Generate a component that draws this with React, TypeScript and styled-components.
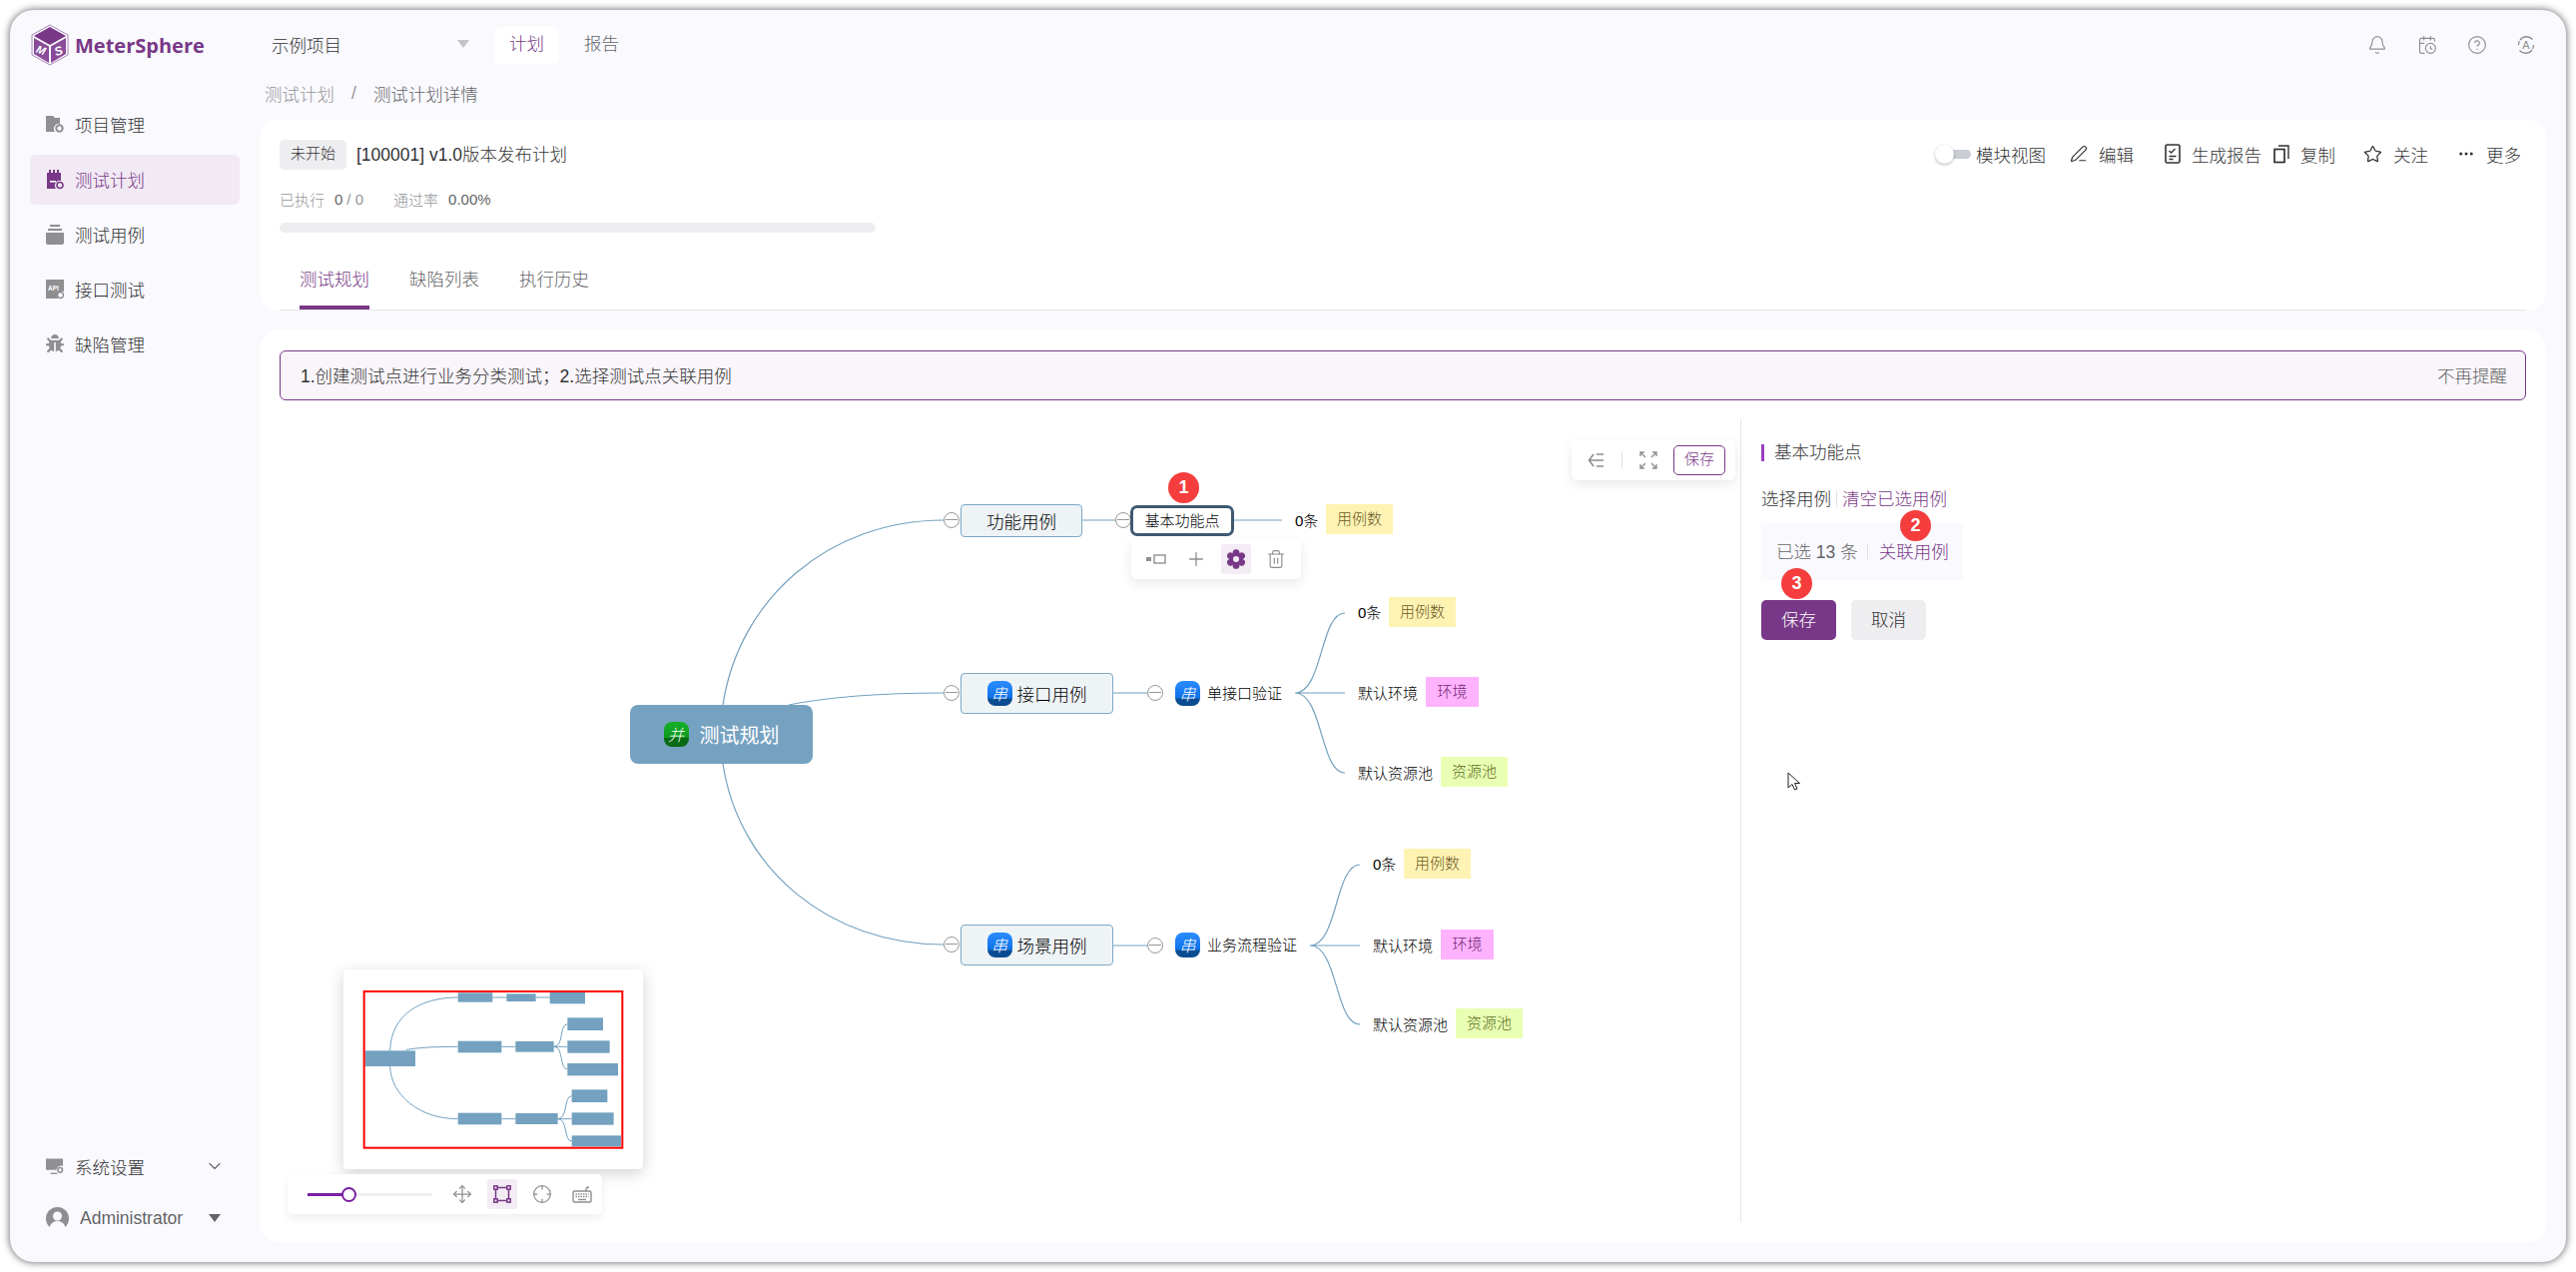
import React from 'react';
import styled, { createGlobalStyle, css } from 'styled-components';
import { Bell, CalendarClock, ChevronDown, CircleHelp, Crosshair, Ellipsis, Move, PenLine, Plus, Star, Trash2 } from 'lucide-react';
import { FaBug } from 'react-icons/fa';

const colors = {
  primary: '#783887',
  text: '#323233',
  sub: '#646466',
  muted: '#959598',
  page: '#f9f9fe',
  line: '#eeeef0',
  icon: '#8f8f92',
  edge: '#73a1bf',
};

// page coords of the mind map canvas, nodes below are given in page coords
const ORIGIN_X = 280;
const ORIGIN_Y = 419;

type Pos = { $x: number; $y: number };
const placed = css<Pos>`
  position: absolute;
  left: ${(p) => p.$x - ORIGIN_X}px;
  top: ${(p) => p.$y - ORIGIN_Y}px;
`;

const Global = createGlobalStyle`
  html, body { margin: 0; padding: 0; background: #fff; }
  body {
    font-family: "Liberation Sans", "Noto Sans CJK SC", sans-serif;
    font-size: 17.5px;
    font-weight: 300;
    color: ${colors.text};
  }
  * { box-sizing: border-box; }
`;

const Page = styled.div`
  width: 2580px;
  height: 1274px;
  padding: 10px;
  overflow: hidden;
`;

const Window = styled.div`
  height: 1254px;
  display: flex;
  background: ${colors.page};
  border-radius: 24px;
  box-shadow: 0 0 7px 1px rgba(0, 0, 0, 0.5);
  overflow: hidden;
`;

const Sidebar = styled.aside`
  width: 250px;
  flex: none;
  display: flex;
  flex-direction: column;
  padding: 14px 0 24px 20px;
`;

const Brand = styled.div`
  display: flex;
  align-items: center;
  height: 42px;
  gap: 6px;
  margin-left: 1px;
  margin-bottom: 34px;
`;

const BrandName = styled.span`
  font-family: "Open Sans", sans-serif;
  font-weight: 700;
  font-size: 20px;
  color: ${colors.primary};
`;

const Menu = styled.nav`
  display: flex;
  flex-direction: column;
  gap: 5px;
  flex: 1;
`;

const MenuItem = styled.div<{ $active?: boolean }>`
  width: 210px;
  height: 50px;
  display: flex;
  align-items: center;
  gap: 11px;
  padding: 0 0 2px 16px;
  border-radius: 6px;
  color: ${(p) => (p.$active ? colors.primary : colors.text)};
  background: ${(p) => (p.$active ? '#f1e9f4' : 'transparent')};
`;

const MenuIcon = styled.span<{ $active?: boolean }>`
  width: 18px;
  height: 18px;
  display: flex;
  color: ${(p) => (p.$active ? colors.primary : colors.icon)};
`;

const Collapse = styled(ChevronDown)`
  margin-left: auto;
  margin-right: 15px;
  color: ${colors.sub};
`;

const UserRow = styled.div`
  width: 210px;
  height: 40px;
  margin-top: 6px;
  display: flex;
  align-items: center;
  padding-left: 16px;
  gap: 11px;
  color: ${colors.sub};
`;

const Caret = styled.span`
  margin-left: auto;
  margin-right: 19px;
  width: 0;
  height: 0;
  border-left: 6px solid transparent;
  border-right: 6px solid transparent;
  border-top: 8px solid ${colors.sub};
`;

const Main = styled.main`
  flex: 1;
  min-width: 0;
  display: flex;
  flex-direction: column;
  padding: 0 20px 20px 0;
`;

const TopBar = styled.header`
  height: 70px;
  flex: none;
  display: flex;
  align-items: center;
  padding: 0 11px 0 12px;
`;

const ProjectSelect = styled.div`
  width: 211px;
  display: flex;
  align-items: center;
  justify-content: space-between;
  padding: 0 13px 2px 0;
`;

const SelectCaret = styled.span`
  width: 0;
  height: 0;
  border-left: 6px solid transparent;
  border-right: 6px solid transparent;
  border-top: 8px solid #c4c4c8;
`;

const NavPill = styled.div<{ $active?: boolean }>`
  height: 37px;
  line-height: 35px;
  padding: 0 15px;
  margin-left: ${(p) => (p.$active ? 12 : 10)}px;
  border-radius: 6px;
  background: ${(p) => (p.$active ? '#fff' : 'transparent')};
  color: ${(p) => (p.$active ? colors.primary : colors.sub)};
`;

const TopIcons = styled.div`
  margin-left: auto;
  display: flex;
  gap: 30px;
  color: ${colors.icon};
`;

const Crumbs = styled.div`
  height: 30px;
  flex: none;
  display: flex;
  align-items: center;
  padding: 0 0 4px 5px;
  margin-bottom: 10px;
  color: ${colors.muted};
`;

const CrumbSep = styled.span`
  margin: 0 17px;
`;

const CrumbNow = styled.span`
  color: ${colors.sub};
`;

const Card = styled.section`
  background: #fff;
  border-radius: 18px;
  padding: 20px 20px 0;
`;

const HeadRow = styled.div`
  height: 30px;
  display: flex;
  align-items: center;
`;

const StatusTag = styled.span`
  width: 67px;
  height: 30px;
  line-height: 28px;
  text-align: center;
  font-size: 15px;
  border-radius: 5px;
  background: ${colors.line};
  margin-right: 10px;
`;

const PlanTitle = styled.span`
  margin-bottom: 3px;
`;

const Actions = styled.div`
  margin-left: auto;
  display: flex;
  align-items: center;
  padding: 0 5px 2px 0;
`;

const Action = styled.div<{ $ml: number }>`
  display: flex;
  align-items: center;
  gap: 11px;
  margin-left: ${(p) => p.$ml}px;
`;

const Toggle = styled.span`
  display: block;
  position: relative;
  width: 36px;
  height: 9px;
  margin-right: 5px;
  border-radius: 5px;
  background: linear-gradient(90deg, #fff 40%, #c9cdd4 40%);
`;

const ToggleKnob = styled.span`
  position: absolute;
  left: 0;
  top: -5px;
  width: 19px;
  height: 19px;
  border-radius: 50%;
  background: #fff;
  box-shadow: 0 1px 3px rgba(0, 0, 0, 0.3);
`;

const Stats = styled.div`
  height: 20px;
  margin-top: 20px;
  display: flex;
  align-items: center;
  padding-bottom: 2px;
  font-size: 15px;
  color: ${colors.muted};
`;

const StatValue = styled.span`
  margin-left: 10px;
  color: ${colors.sub};
`;

const StatTotal = styled.span`
  margin-left: 4px;
  margin-right: 30px;
`;

const Progress = styled.div`
  width: 597px;
  height: 10px;
  margin-top: 13px;
  border-radius: 5px;
  background: ${colors.line};
`;

const Tabs = styled.div`
  height: 61px;
  margin-top: 17px;
  display: flex;
  gap: 40px;
  padding-left: 20px;
  border-bottom: 1px solid #e6e6ea;
`;

const Tab = styled.div<{ $active?: boolean }>`
  height: 60px;
  line-height: 52px;
  padding-top: 4px;
  border-bottom: 4px solid ${(p) => (p.$active ? colors.primary : 'transparent')};
  color: ${(p) => (p.$active ? colors.primary : colors.sub)};
`;

const PlanCard = styled(Card)`
  flex: 1;
  margin-top: 20px;
  min-height: 0;
  padding-bottom: 20px;
  display: flex;
  flex-direction: column;
`;

const Notice = styled.div`
  height: 50px;
  flex: none;
  display: flex;
  align-items: center;
  justify-content: space-between;
  padding: 0 18px 2px 20px;
  border: 1px solid ${colors.primary};
  border-radius: 6px;
  background: #f9f5fa;
`;

const NoticeClose = styled.span`
  color: ${colors.sub};
`;

const Split = styled.div`
  flex: 1;
  min-height: 0;
  margin-top: 18px;
  display: flex;
`;

const Canvas = styled.div`
  flex: 1;
  position: relative;
`;

const Edges = styled.svg`
  position: absolute;
  left: 0;
  top: 0;
`;

const MapText = styled.span<Pos>`
  ${placed}
  font-size: 15px;
  line-height: 22px;
  color: #000;
  white-space: nowrap;
`;

const Branch = styled.div<Pos & { $w: number; $h: number }>`
  ${placed}
  width: ${(p) => p.$w}px;
  height: ${(p) => p.$h}px;
  display: flex;
  align-items: center;
  justify-content: center;
  gap: 5px;
  color: #000;
  background: #eef3f6;
  border: 1.5px solid #7fa8c6;
  border-radius: 4px;
`;

const Root = styled.div<Pos>`
  ${placed}
  width: 183px;
  height: 59px;
  display: flex;
  align-items: center;
  justify-content: center;
  gap: 11px;
  font-size: 20px;
  font-weight: 400;
  color: #fff;
  background: #76a2c1;
  border-radius: 8px;
`;

const Focused = styled.div<Pos>`
  ${placed}
  width: 104px;
  height: 31px;
  line-height: 25px;
  text-align: center;
  font-size: 15px;
  color: #000;
  background: #fff;
  border: 3px solid #3e5a72;
  border-radius: 7px;
`;

const Kind = styled.span<{ $tone: 'blue' | 'green' }>`
  width: 25px;
  height: 25px;
  flex: none;
  display: flex;
  align-items: center;
  justify-content: center;
  padding-bottom: 2px;
  border-radius: 8px;
  font-size: 16px;
  font-weight: 300;
  font-style: italic;
  color: #fff;
  background: ${(p) =>
    p.$tone === 'blue'
      ? 'linear-gradient(180deg, #2a8cff 0%, #0f72e6 68%, #0a4c92 72%, #0a4c92 100%)'
      : 'linear-gradient(180deg, #16b02a 0%, #0c9a1e 62%, #086a12 66%, #086a12 100%)'};
`;

const PlacedKind = styled(Kind)<Pos>`
  ${placed}
`;

const Note = styled.span<Pos & { $w: number; $bg: string; $fg: string }>`
  ${placed}
  width: ${(p) => p.$w}px;
  height: 30px;
  line-height: 30px;
  text-align: center;
  font-size: 15px;
  background: ${(p) => p.$bg};
  color: ${(p) => p.$fg};
`;

const Fold = styled.span<Pos>`
  ${placed}
  width: 16px;
  height: 16px;
  border: 1.5px solid #979797;
  border-radius: 50%;
  background: #fff;
  &::after {
    content: '';
    position: absolute;
    left: 1px;
    right: 1px;
    top: 5.5px;
    height: 1.5px;
    background: #979797;
  }
`;

const FloatBar = styled.div<Pos & { $w: number }>`
  ${placed}
  width: ${(p) => p.$w}px;
  height: 40px;
  display: flex;
  align-items: center;
  background: #fff;
  border-radius: 5px;
  box-shadow: 0 4px 12px rgba(31, 35, 41, 0.1);
  color: ${colors.icon};
`;

const ToolSlot = styled.span<{ $on?: boolean }>`
  width: 30px;
  height: 30px;
  margin-left: 10px;
  display: flex;
  align-items: center;
  justify-content: center;
  border-radius: 3px;
  background: ${(p) => (p.$on ? '#f3ecf5' : 'transparent')};
  color: ${(p) => (p.$on ? colors.primary : colors.icon)};
`;

const ToolDivider = styled.span`
  width: 1px;
  height: 16px;
  margin: 0 1px 0 10px;
  background: #e0e0e4;
`;

const SaveSmall = styled.span`
  width: 52px;
  height: 30px;
  line-height: 26px;
  margin-left: 10px;
  text-align: center;
  font-size: 15px;
  border: 1px solid ${colors.primary};
  border-radius: 5px;
  color: ${colors.primary};
`;

const MiniMap = styled.div<Pos>`
  ${placed}
  width: 300px;
  height: 200px;
  background: #fff;
  border-radius: 4px;
  box-shadow: 0 4px 16px rgba(0, 0, 0, 0.18);
`;

const ZoomBar = styled(FloatBar)`
  padding-left: 20px;
  box-shadow: 0 4px 10px rgba(31, 35, 41, 0.07);
`;

const SliderTrack = styled.span`
  position: relative;
  width: 125px;
  height: 3px;
  margin-right: 5px;
  border-radius: 2px;
  background: ${colors.line};
`;

const SliderFill = styled.span`
  position: absolute;
  left: 0;
  top: 0;
  bottom: 0;
  width: 41px;
  background: #7b1fa2;
`;

const SliderKnob = styled.span`
  position: absolute;
  left: 34px;
  top: -6px;
  width: 15px;
  height: 15px;
  border: 2px solid #7b1fa2;
  border-radius: 50%;
  background: #fff;
`;

const Panel = styled.aside`
  width: 787px;
  flex: none;
  position: relative;
  border-left: 1px solid #e6e6ea;
  padding: 26px 0 0 20px;
`;

const PanelTitle = styled.div`
  height: 17px;
  line-height: 17px;
  padding-left: 10px;
  border-left: 3px solid #9a3fbf;
`;

const PickRow = styled.div`
  height: 20px;
  line-height: 20px;
  margin-top: 28px;
  display: flex;
  align-items: center;
`;

const PickDivider = styled.span`
  width: 1px;
  height: 16px;
  margin: 0 5px;
  background: #e0e0e4;
`;

const LinkText = styled.span`
  color: ${colors.primary};
`;

const Picked = styled.div`
  width: 202px;
  height: 57px;
  margin-top: 14px;
  display: flex;
  align-items: center;
  padding: 0 0 2px 15px;
  background: ${colors.page};
  color: ${colors.sub};
`;

const PickedDivider = styled(PickDivider)`
  margin: 0 11px 0 9px;
`;

const Buttons = styled.div`
  margin-top: 20px;
  display: flex;
  gap: 15px;
`;

const Button = styled.button<{ $primary?: boolean }>`
  width: 75px;
  height: 40px;
  padding: 0 0 3px;
  border: none;
  border-radius: 5px;
  font: inherit;
  color: ${(p) => (p.$primary ? '#fff' : colors.text)};
  background: ${(p) => (p.$primary ? colors.primary : colors.line)};
`;

const Badge = styled.span<Pos>`
  ${placed}
  width: 31px;
  height: 31px;
  line-height: 31px;
  text-align: center;
  border-radius: 50%;
  font-size: 18px;
  font-weight: 700;
  color: #fff;
  background: #f53d3d;
`;

// the panel is a separate offset parent, its left edge sits at 1743 in the page
const PanelBadge = styled(Badge)`
  left: ${(p) => p.$x - 1743}px;
`;

const Pointer = styled.svg`
  position: absolute;
  left: 46px;
  top: 354px;
`;

const Logo = () => (
  <svg width="38" height="42" viewBox="0 0 38 42">
    <path d="M19 1 37 11v20L19 41 1 31V11z" fill="none" stroke={colors.primary} strokeWidth="1" opacity=".6" />
    <path d="M19 3 35 12 19 21 3 12z" fill={colors.primary} />
    <path d="M3 14 18 22.500V39L3 30z" fill="#8a4b99" />
    <path d="M35 14 20 22.500V39L35 30z" fill="#8a4b99" />
    <text x="5" y="30" fontSize="11" fontWeight="700" fontStyle="italic" fill="#fff" fontFamily="Liberation Sans" transform="rotate(20 10 28)">M</text>
    <text x="24" y="31" fontSize="12" fontWeight="700" fontStyle="italic" fill="#fff" fontFamily="Liberation Sans" transform="rotate(-20 28 28)">S</text>
  </svg>
);

const ProjectIcon = () => (
  <svg width="18" height="18" viewBox="0 0 18 18" fill="currentColor">
    <path d="M0 1h7l2 2h5v6a5 5 0 0 0-5 8H0z" />
    <circle cx="13.500" cy="13.500" r="3.200" fill="none" stroke="currentColor" strokeWidth="2" />
  </svg>
);

const PlanIcon = () => (
  <svg width="18" height="20" viewBox="0 0 18 20" fill="currentColor">
    <path d="M1 3h2V0h2v3h2V0h2v3h2V0h2v3h2v8a5 5 0 0 0-5 8H1z" />
    <rect x="4" y="11" width="6" height="1.600" fill="#fff" />
    <circle cx="14" cy="15.500" r="3" fill="none" stroke="currentColor" strokeWidth="1.600" />
  </svg>
);

const CaseIcon = () => (
  <svg width="18" height="20" viewBox="0 0 18 20" fill="currentColor">
    <rect x="4" y="0" width="10" height="2" />
    <rect x="2" y="4" width="14" height="2" />
    <path d="M0 8h18v10a2 2 0 0 1-2 2H2a2 2 0 0 1-2-2z" />
  </svg>
);

const ApiIcon = () => (
  <svg width="18" height="20" viewBox="0 0 18 20" fill="currentColor">
    <path d="M0 0h18v12a5 5 0 0 0-6 7H0z" />
    <text x="2" y="11" fontSize="6.500" fontWeight="700" fill="#fff" fontFamily="Liberation Sans">API</text>
    <circle cx="14.500" cy="15.500" r="3" fill="none" stroke="currentColor" strokeWidth="1.400" />
  </svg>
);

const SettingsIcon = () => (
  <svg width="19" height="18" viewBox="0 0 19 18" fill="currentColor">
    <path d="M0 1h18v8a5 5 0 0 0-7 4H0z" />
    <rect x="5" y="16" width="7" height="1.400" />
    <circle cx="15" cy="13" r="2.500" fill="none" stroke="currentColor" strokeWidth="1.600" />
  </svg>
);

const AvatarIcon = () => (
  <svg width="23" height="23" viewBox="0 0 23 23">
    <circle cx="11.500" cy="11.500" r="11.500" fill={colors.icon} />
    <circle cx="11.500" cy="9" r="4.500" fill={colors.page} />
    <path d="M3.500 21c1-5 4-7 8-7s7 2 8 7a11 11 0 0 1-16 0z" fill={colors.page} />
  </svg>
);

const LangIcon = () => (
  <svg width="18" height="20" viewBox="0 0 18 20" fill="none" stroke="currentColor" strokeWidth="1.300">
    <path d="M3 5a8 8 0 0 1 12.500-.5M15 15a8 8 0 0 1-12.500.5M1.500 10a7.500 7.500 0 0 1 1-4M16.500 10a7.500 7.500 0 0 1-1 4" />
    <text x="9" y="14" textAnchor="middle" fontSize="11" stroke="none" fill="currentColor" fontFamily="Liberation Sans">A</text>
  </svg>
);

const ReportIcon = () => (
  <svg width="16" height="20" viewBox="0 0 16 20" fill="none" stroke={colors.text} strokeWidth="1.600">
    <rect x="1" y="1" width="14" height="18" rx="1.500" />
    <path d="M4.500 7l2 2 4-4M4.500 12.500h7M4.500 15.500h4" strokeWidth="1.300" />
  </svg>
);

const CopyIcon = () => (
  <svg width="16" height="20" viewBox="0 0 16 20" fill="none" stroke={colors.text} strokeWidth="1.700">
    <rect x="1" y="5.500" width="10" height="13" />
    <path d="M5 2h10v13" strokeWidth="1.400" />
  </svg>
);

const OutlineIcon = () => (
  <svg width="18" height="18" viewBox="0 0 18 18" fill="none" stroke="currentColor" strokeWidth="1.600">
    <path d="M6 3 1.500 9 6 15M1.500 9H14M9 3h7M9 15h7M11 9h5" />
  </svg>
);

const FullIcon = () => (
  <svg width="18" height="18" viewBox="0 0 18 18" fill="none" stroke="currentColor" strokeWidth="1.400">
    <path d="M1 5V1h4M1 1l5 5M17 5V1h-4M17 1l-5 5M1 13v4h4M1 17l5-5M17 13v4h-4M17 17l-5-5" />
  </svg>
);

const NodeRectIcon = () => (
  <svg width="20" height="10" viewBox="0 0 20 10" fill="none" stroke="currentColor" strokeWidth="1.400">
    <rect x="0" y="3" width="5" height="4" fill="currentColor" stroke="none" />
    <rect x="8" y="1" width="11" height="8" />
  </svg>
);

const GearIcon = () => (
  <svg width="18" height="20" viewBox="0 0 18 20" fill={colors.primary}>
    {[0, 60, 120, 180, 240, 300].map((a) => (
      <circle key={a} cx="9" cy="3.600" r="3.400" transform={`rotate(${a} 9 10)`} />
    ))}
    <circle cx="9" cy="10" r="6" />
    <circle cx="9" cy="10" r="3" fill="#f3ecf5" />
  </svg>
);

const FrameIcon = () => (
  <svg width="18" height="18" viewBox="0 0 18 18" fill="none" stroke="currentColor" strokeWidth="1.500">
    <rect x="2.500" y="2.500" width="13" height="13" />
    <rect x="0.800" y="0.800" width="3.400" height="3.400" fill="#f3ecf5" />
    <rect x="13.800" y="0.800" width="3.400" height="3.400" fill="#f3ecf5" />
    <rect x="0.800" y="13.800" width="3.400" height="3.400" fill="#f3ecf5" />
    <rect x="13.800" y="13.800" width="3.400" height="3.400" fill="#f3ecf5" />
  </svg>
);

const KeyboardIcon = () => (
  <svg width="20" height="18" viewBox="0 0 20 18" fill="none" stroke="currentColor" strokeWidth="1.400">
    <rect x="1" y="6" width="18" height="11" rx="1.500" />
    <path d="M14 6V4a1.500 1.500 0 0 1 1.500-1.500H16V1" />
    <path d="M3.500 9h13M3.500 11.500h13" strokeDasharray="1.500 1" />
    <path d="M6 14.500h8" />
  </svg>
);

// all drawn in page coords thanks to the viewBox
const MapEdges = () => (
  <Edges width="1463" height="805" viewBox={`${ORIGIN_X} ${ORIGIN_Y} 1463 805`} fill="none" stroke={colors.edge} strokeWidth="1.200">
    <path d="M724 706C740 600 830 521 945 521" />
    <path d="M790 706C830 698 880 694 945 694" />
    <path d="M724 765C740 870 830 946 945 946" />
    <path d="M1084 521H1118M1236 521H1284" />
    <path d="M1115 694H1150M1115 947H1150" />
    <path d="M1297 694C1325 694 1322 614 1347 614M1297 694H1347M1297 694C1325 694 1322 774 1347 774" />
    <path d="M1312 947C1340 947 1337 866 1362 866M1312 947H1362M1312 947C1340 947 1337 1026 1362 1026" />
  </Edges>
);

const miniBlocks = [
  [626, 132, 104, 28], [772, 135, 88, 23], [902, 130, 106, 35],
  [955, 207, 107, 38], [955, 276, 127, 37], [955, 344, 152, 37],
  [626, 277, 131, 35], [799, 278, 115, 32], [347, 306, 151, 47],
  [626, 493, 131, 35], [799, 494, 127, 33],
  [968, 423, 107, 38], [968, 492, 126, 37], [968, 561, 148, 33],
];

const MiniDrawing = () => (
  <svg width="300" height="200" viewBox="282 62 900 600">
    <g fill="none" stroke={colors.edge} strokeWidth="3">
      <path d="M422 306C425 200 510 146 626 146M470 303C520 295 570 294 626 294M422 353C425 440 510 511 626 511" />
      <path d="M730 146H772M860 146H902M757 294H799M757 511H799" />
      <path d="M914 294C945 294 930 226 955 226M914 294H955M914 294C945 294 930 362 955 362" />
      <path d="M926 511C957 511 943 442 968 442M926 511H968M926 511C957 511 943 578 968 578" />
    </g>
    {miniBlocks.map(([x, y, w, h]) => (
      <rect key={`${x}-${y}`} x={x} y={y} width={w} height={h} fill={colors.edge} />
    ))}
    <rect x="344" y="128" width="776" height="470" fill="none" stroke="#f00" strokeWidth="6" />
  </svg>
);

const YELLOW = { $bg: '#fff3b4', $fg: '#6b5a1e' };
const PINK = { $bg: '#ffb3ff', $fg: '#6f1f6f' };
const LIME = { $bg: '#e9ffb3', $fg: '#5a6a1a' };

const Leaves = ({ x, y0, y1, y2 }: { x: number; y0: number; y1: number; y2: number }) => (
  <>
    <MapText $x={x} $y={y0 - 11}>0条</MapText>
    <Note $x={x + 31} $y={y0 - 16} $w={67} {...YELLOW}>用例数</Note>
    <MapText $x={x} $y={y1 - 10}>默认环境</MapText>
    <Note $x={x + 68} $y={y1 - 16} $w={53} {...PINK}>环境</Note>
    <MapText $x={x} $y={y2 - 10}>默认资源池</MapText>
    <Note $x={x + 83} $y={y2 - 16} $w={67} {...LIME}>资源池</Note>
  </>
);

const App = () => (
  <Page>
    <Global />
    <Window>
      <Sidebar>
        <Brand>
          <Logo />
          <BrandName>MeterSphere</BrandName>
        </Brand>
        <Menu>
          <MenuItem><MenuIcon><ProjectIcon /></MenuIcon>项目管理</MenuItem>
          <MenuItem $active><MenuIcon $active><PlanIcon /></MenuIcon>测试计划</MenuItem>
          <MenuItem><MenuIcon><CaseIcon /></MenuIcon>测试用例</MenuItem>
          <MenuItem><MenuIcon><ApiIcon /></MenuIcon>接口测试</MenuItem>
          <MenuItem><MenuIcon><FaBug size={18} /></MenuIcon>缺陷管理</MenuItem>
        </Menu>
        <MenuItem>
          <MenuIcon><SettingsIcon /></MenuIcon>系统设置
          <Collapse size={20} strokeWidth={1.3} />
        </MenuItem>
        <UserRow>
          <AvatarIcon />Administrator
          <Caret />
        </UserRow>
      </Sidebar>

      <Main>
        <TopBar>
          <ProjectSelect>示例项目<SelectCaret /></ProjectSelect>
          <NavPill $active>计划</NavPill>
          <NavPill>报告</NavPill>
          <TopIcons>
            <Bell size={20} strokeWidth={1.4} />
            <CalendarClock size={20} strokeWidth={1.4} />
            <CircleHelp size={20} strokeWidth={1.4} />
            <LangIcon />
          </TopIcons>
        </TopBar>
        <Crumbs>
          测试计划<CrumbSep>/</CrumbSep><CrumbNow>测试计划详情</CrumbNow>
        </Crumbs>

        <Card>
          <HeadRow>
            <StatusTag>未开始</StatusTag>
            <PlanTitle>[100001] v1.0版本发布计划</PlanTitle>
            <Actions>
              <Toggle><ToggleKnob /></Toggle>
              模块视图
              <Action $ml={24}><PenLine size={18} strokeWidth={1.6} />编辑</Action>
              <Action $ml={31}><ReportIcon />生成报告</Action>
              <Action $ml={12}><CopyIcon />复制</Action>
              <Action $ml={28}><Star size={19} strokeWidth={1.6} />关注</Action>
              <Action $ml={29}><Ellipsis size={18} />更多</Action>
            </Actions>
          </HeadRow>
          <Stats>
            已执行<StatValue>0</StatValue><StatTotal>/ 0</StatTotal>
            通过率<StatValue>0.00%</StatValue>
          </Stats>
          <Progress />
          <Tabs>
            <Tab $active>测试规划</Tab>
            <Tab>缺陷列表</Tab>
            <Tab>执行历史</Tab>
          </Tabs>
        </Card>

        <PlanCard>
          <Notice>
            1.创建测试点进行业务分类测试；2.选择测试点关联用例
            <NoticeClose>不再提醒</NoticeClose>
          </Notice>
          <Split>
            <Canvas>
              <MapEdges />
              <Root $x={631} $y={706}><Kind $tone="green">并</Kind>测试规划</Root>

              <Fold $x={945} $y={513} />
              <Branch $x={962} $y={505} $w={122} $h={33}>功能用例</Branch>
              <Fold $x={1117} $y={513} />
              <Focused $x={1132} $y={506}>基本功能点</Focused>
              <Badge $x={1170} $y={473}>1</Badge>
              <MapText $x={1297} $y={511}>0条</MapText>
              <Note $x={1328} $y={505} $w={67} {...YELLOW}>用例数</Note>
              <FloatBar $x={1133} $y={540} $w={170}>
                <ToolSlot><NodeRectIcon /></ToolSlot>
                <ToolSlot><Plus size={22} strokeWidth={1.4} /></ToolSlot>
                <ToolSlot $on><GearIcon /></ToolSlot>
                <ToolSlot><Trash2 size={20} strokeWidth={1.4} /></ToolSlot>
              </FloatBar>

              <Fold $x={945} $y={686} />
              <Branch $x={962} $y={674} $w={153} $h={41}><Kind $tone="blue">串</Kind>接口用例</Branch>
              <Fold $x={1149} $y={686} />
              <PlacedKind $tone="blue" $x={1177} $y={682}>串</PlacedKind>
              <MapText $x={1209} $y={684}>单接口验证</MapText>
              <Leaves x={1360} y0={614} y1={694} y2={774} />

              <Fold $x={945} $y={938} />
              <Branch $x={962} $y={926} $w={153} $h={41}><Kind $tone="blue">串</Kind>场景用例</Branch>
              <Fold $x={1149} $y={939} />
              <PlacedKind $tone="blue" $x={1177} $y={934}>串</PlacedKind>
              <MapText $x={1209} $y={936}>业务流程验证</MapText>
              <Leaves x={1375} y0={866} y1={947} y2={1026} />

              <FloatBar $x={1574} $y={441} $w={164}>
                <ToolSlot><OutlineIcon /></ToolSlot>
                <ToolDivider />
                <ToolSlot><FullIcon /></ToolSlot>
                <SaveSmall>保存</SaveSmall>
              </FloatBar>

              <MiniMap $x={344} $y={971}><MiniDrawing /></MiniMap>
              <ZoomBar $x={288} $y={1176} $w={315}>
                <SliderTrack><SliderFill /><SliderKnob /></SliderTrack>
                <ToolSlot><Move size={20} strokeWidth={1.5} /></ToolSlot>
                <ToolSlot $on><FrameIcon /></ToolSlot>
                <ToolSlot><Crosshair size={20} strokeWidth={1.5} /></ToolSlot>
                <ToolSlot><KeyboardIcon /></ToolSlot>
              </ZoomBar>
            </Canvas>

            <Panel>
              <PanelTitle>基本功能点</PanelTitle>
              <PickRow>选择用例<PickDivider /><LinkText>清空已选用例</LinkText></PickRow>
              <Picked>已选 13 条<PickedDivider /><LinkText>关联用例</LinkText></Picked>
              <Buttons>
                <Button $primary>保存</Button>
                <Button>取消</Button>
              </Buttons>
              <PanelBadge $x={1902} $y={511}>2</PanelBadge>
              <PanelBadge $x={1783} $y={569}>3</PanelBadge>
              <Pointer width="14" height="20" viewBox="0 0 14 20">
                <path d="M1 1v15l4-3.500 2.500 5.500 2.500-1-2.500-5.500H12.500z" fill="#fff" stroke="#222" strokeWidth="1" />
              </Pointer>
            </Panel>
          </Split>
        </PlanCard>
      </Main>
    </Window>
  </Page>
);

export default App;
